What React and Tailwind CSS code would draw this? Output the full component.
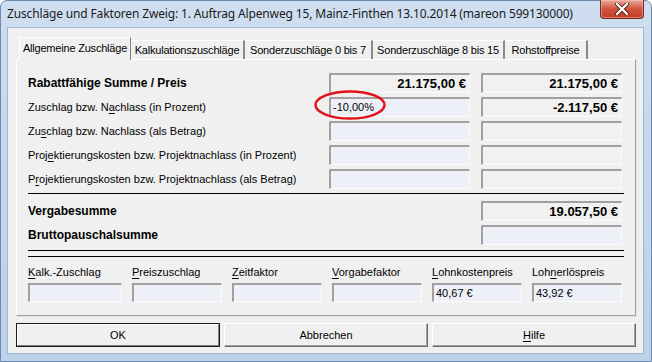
export default function App() {
  const sunken =
    "border-t-2 border-l-2 border-r border-b border-t-[#a0a0a0] border-l-[#a0a0a0] border-r-[#fbfbfb] border-b-[#fbfbfb]";
  const blue = "bg-[#edf1f7]";
  const gray = "bg-[#f1f1f1]";

  const Box = ({ w = "w-[141px]", bg = blue, h = "h-[20px]", children, right }) => (
    <div
      className={`${w} ${h} ${sunken} ${bg} flex items-center ${right ? "justify-end pr-[3px]" : "pl-[2px]"} shrink-0`}
    >
      {children}
    </div>
  );

  const U = ({ children }) => <span className="underline underline-offset-[2px]">{children}</span>;

  const Row = ({ label, bold, c1, c2, b1 = blue, b2 = gray }) => (
    <div className="flex items-center h-[20px]">
      <div
        className={`w-[301px] shrink-0 ${bold ? "font-bold text-[12px]" : "text-[11px]"} text-black leading-none`}
      >
        {label}
      </div>
      <Box bg={b1} right={c1 && c1.bold}>
        {c1 && (
          <span className={c1.bold ? "font-bold text-[13px]" : "text-[11px]"}>{c1.text}</span>
        )}
      </Box>
      <div className="w-[11px] shrink-0" />
      <Box bg={b2} right>
        {c2 && <span className="font-bold text-[13px]">{c2}</span>}
      </Box>
    </div>
  );

  const tabs = [
    { t: "Kalkulationszuschläge", w: "w-[114px]" },
    { t: "Sonderzuschläge 0 bis 7", w: "w-[128px]" },
    { t: "Sonderzuschläge 8 bis 15", w: "w-[132px]" },
    { t: "Rohstoffpreise", w: "w-[83px]" },
  ];

  const bottom = [
    { l: <><U>K</U>alk.-Zuschlag</>, w: "w-[94px]" },
    { l: <><U>P</U>reiszuschlag</>, w: "w-[90px]" },
    { l: <><U>Z</U>eitfaktor</>, w: "w-[90px]" },
    { l: <><U>V</U>orgabefaktor</>, w: "w-[90px]" },
    { l: <><U>L</U>ohnkostenpreis</>, w: "w-[90px]", v: "40,67 €" },
    { l: <>Loh<U>n</U>erlöspreis</>, w: "w-[90px]", v: "43,92 €" },
  ];

  return (
    <div className="relative w-[652px] h-[362px] overflow-hidden font-['Liberation_Sans',Arial,sans-serif] text-black bg-white">
      <div className="w-full h-full flex flex-col rounded-t-[7px] border border-[#6f8cae] bg-gradient-to-b from-[#cfdef0] via-[#c3d6ec] to-[#bcd1ea]">
        {/* title bar */}
        <div className="h-[26px] shrink-0 flex items-center pl-[6px]">
          <span className="text-[12px] text-[#1b1b1b] font-['Noto_Sans',sans-serif] tracking-[-0.15px]">
            Zuschläge und Faktoren Zweig: 1. Auftrag Alpenweg 15, Mainz-Finthen 13.10.2014 (mareon 599130000)
          </span>
        </div>

        {/* client area */}
        <div className="ml-[6px] mr-[7px] mb-[7px] flex-1 bg-[#f0f0f0] border border-[#9fb6d1] pl-[8px] pt-[9px] flex flex-col">
          {/* tabs */}
          <div className="flex items-end h-[22px] pl-[3px] relative z-10">
            <div className="w-[112px] h-[23px] -mb-px bg-[#f0f0f0] border-l border-t border-white border-r border-r-[#808080] flex items-center justify-center text-[11px] tracking-[-0.2px] pb-[2px]">
              Allgemeine Zuschläge
            </div>
            {tabs.map((t) => (
              <div
                key={t.t}
                className={`${t.w} h-[19px] bg-[#f0f0f0] border-t border-white border-r-2 border-r-[#8a8a8a] flex items-center justify-center text-[11px] tracking-[-0.2px]`}
              >
                {t.t}
              </div>
            ))}
          </div>

          {/* panel */}
          <div className="w-[620px] h-[257px] border border-l-white border-t-white border-r-[#a0a0a0] border-b-[#a0a0a0] shadow-[1px_1px_0_#e0e0e0] pl-[11px] pt-[13px] flex flex-col">
            <div className="flex flex-col gap-[4px]">
              <Row
                bold
                label="Rabattfähige Summe / Preis"
                b1={gray}
                c1={{ bold: true, text: "21.175,00 €" }}
                c2="21.175,00 €"
              />
            </div>
            <div className="flex flex-col gap-[4px] mt-[4px]">
              <Row label={<>Zuschlag bzw. N<U>a</U>chlass (in Prozent)</>} c1={{ text: "-10,00%" }} c2="-2.117,50 €" />
              <Row label={<>Zu<U>s</U>chlag bzw. Nachlass (als Betrag)</>} />
              <Row label={<>Proj<U>e</U>ktierungskosten bzw. Projektnachlass (in Prozent)</>} />
              <Row label={<>P<U>r</U>ojektierungskosten bzw. Projektnachlass (als Betrag)</>} />
            </div>
            <div className="w-[596px] h-px bg-black mt-[4px]" />
            <div className="flex flex-col gap-[4px] mt-[7px]">
              <div className="flex items-center h-[20px]">
                <div className="w-[453px] shrink-0 font-bold text-[12px] leading-none">Vergabesumme</div>
                <Box bg={gray} right>
                  <span className="font-bold text-[13px]">19.057,50 €</span>
                </Box>
              </div>
              <div className="flex items-center h-[20px]">
                <div className="w-[453px] shrink-0 font-bold text-[12px] leading-none">Bruttopauschalsumme</div>
                <Box bg={blue} />
              </div>
            </div>
            <div className="w-[596px] h-px bg-black mt-[5px]" />
            <div className="w-[596px] h-px bg-black mt-[5px]" />
            <div className="flex gap-[10px] mt-[9px]">
              {bottom.map((b, i) => (
                <div key={i} className={`${b.w} flex flex-col`}>
                  <div className="text-[11px] leading-[13px] h-[14px]">{b.l}</div>
                  <div className="mt-[3px]">
                    <Box w={b.w} h="h-[19px]" bg={blue}>
                      {b.v && <span className="text-[11px]">{b.v}</span>}
                    </Box>
                  </div>
                </div>
              ))}
            </div>
          </div>

          {/* buttons */}
          <div className="flex gap-[4px] mt-[7px]">
            <div className="w-[204px] h-[24px] border border-[#1a1a1a] flex">
              <div className="flex-1 border border-l-white border-t-white border-r-[#808080] border-b-[#808080] bg-[#f0f0f0] flex items-center justify-center text-[11px]">
                OK
              </div>
            </div>
            <div className="w-[204px] h-[24px] border border-l-white border-t-white border-r-[#6d6d6d] border-b-[#6d6d6d] shadow-[inset_-1px_-1px_0_#a0a0a0] bg-[#f0f0f0] flex items-center justify-center text-[11px]">
              Abbrechen
            </div>
            <div className="w-[204px] h-[24px] border border-l-white border-t-white border-r-[#6d6d6d] border-b-[#6d6d6d] shadow-[inset_-1px_-1px_0_#a0a0a0] bg-[#f0f0f0] flex items-center justify-center text-[11px]">
              <span>
                <U>H</U>ilfe
              </span>
            </div>
          </div>
        </div>
      </div>

      {/* close button */}
      <div className="absolute top-0 right-[8px] w-[44px] h-[19px] rounded-b-[4px] border border-t-0 border-[#6b2a22] bg-gradient-to-b from-[#e9a99b] via-[#d0523c] to-[#c23a24] flex items-center justify-center shadow-[inset_0_0_0_1px_rgba(255,200,190,0.5)]">
        <svg width="14" height="12" viewBox="0 0 14 12">
          <path d="M2 1 L12 11 M12 1 L2 11" stroke="#4a1a12" strokeWidth="4" strokeLinecap="round" />
          <path d="M2 1 L12 11 M12 1 L2 11" stroke="#ffffff" strokeWidth="2.4" strokeLinecap="round" />
        </svg>
      </div>

      {/* red annotation ellipse */}
      <svg className="absolute left-[313px] top-[89px]" width="74" height="32" viewBox="0 0 74 32">
        <ellipse cx="37" cy="16" rx="34.5" ry="13.5" fill="none" stroke="#e3121a" strokeWidth="2.5" />
      </svg>
    </div>
  );
}
